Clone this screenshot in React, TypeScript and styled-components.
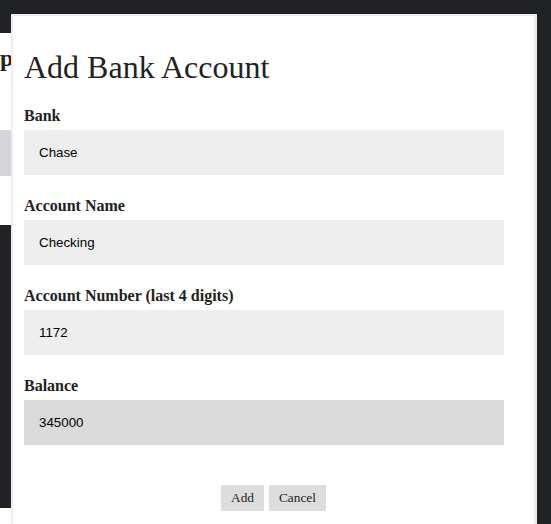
import styled, { createGlobalStyle } from "styled-components";

const GlobalStyle = createGlobalStyle`
  body {
    margin: 0;
    background: #212226;
    font-family: "Liberation Serif", "Times New Roman", serif;
    color: #222;
  }
`;

const Page = styled.div`
  position: relative;
  width: 551px;
  height: 524px;
  overflow: hidden;
`;

const Backdrop = styled.div`
  margin-top: 33px;
  width: 520px;
  background: #ffffff;
  display: flex;
  flex-direction: column;
`;

const PageTitle = styled.h2`
  margin: 0;
  height: 97px;
  padding-top: 12px;
  box-sizing: border-box;
  font-size: 24px;
  font-weight: bold;
  color: #222;
`;

const GrayBar = styled.div`
  height: 46px;
  background: #d5d6da;
`;

const Spacer = styled.div`
  height: 49px;
`;

const DarkSection = styled.div`
  height: 283px;
  background: #212226;
`;

const Footer = styled.div`
  height: 30px;
`;

const Modal = styled.div`
  position: absolute;
  left: 11px;
  top: 14px;
  width: 510px;
  height: 504px;
  background: #ffffff;
  border-style: solid;
  border-color: #eeeeee;
  border-width: 2px 3px 4px 2px;
  padding: 0 0 9px 11px;
  box-sizing: content-box;
  display: flex;
  flex-direction: column;
`;

const Heading = styled.h1`
  margin: 33px 0 21px;
  font-size: 32px;
  font-weight: normal;
  color: #222;
`;

const Field = styled.div`
  display: flex;
  flex-direction: column;
  margin-bottom: 22px;
`;

const Label = styled.label`
  font-size: 16px;
  font-weight: bold;
  line-height: 18px;
  margin-bottom: 5px;
  color: #222;
`;

const Input = styled.input<{ $active?: boolean }>`
  width: 480px;
  height: 45px;
  box-sizing: border-box;
  padding: 0 15px;
  border: none;
  outline: none;
  background: ${(p) => (p.$active ? "#dadada" : "#eeeeee")};
  font-family: "Liberation Sans", Arial, sans-serif;
  font-size: 13.333px;
  color: #000;
`;

const Actions = styled.div`
  display: flex;
  justify-content: center;
  gap: 5px;
  margin-top: 18px;
  padding-right: 11px;
`;

const Button = styled.button`
  height: 26px;
  padding: 0 10px;
  border: none;
  background: #dddddd;
  font-family: "Liberation Serif", "Times New Roman", serif;
  font-size: 13.333px;
  color: #222;
`;

const fields = [
  { label: "Bank", value: "Chase" },
  { label: "Account Name", value: "Checking" },
  { label: "Account Number (last 4 digits)", value: "1172" },
  { label: "Balance", value: "345000", active: true },
];

export default function App() {
  return (
    <>
      <GlobalStyle />
      <Page>
        <Backdrop>
          <PageTitle>p</PageTitle>
          <GrayBar />
          <Spacer />
          <DarkSection />
          <Footer />
        </Backdrop>
        <Modal>
          <Heading>Add Bank Account</Heading>
          {fields.map((f) => (
            <Field key={f.label}>
              <Label>{f.label}</Label>
              <Input defaultValue={f.value} $active={f.active} readOnly />
            </Field>
          ))}
          <Actions>
            <Button>Add</Button>
            <Button>Cancel</Button>
          </Actions>
        </Modal>
      </Page>
    </>
  );
}
